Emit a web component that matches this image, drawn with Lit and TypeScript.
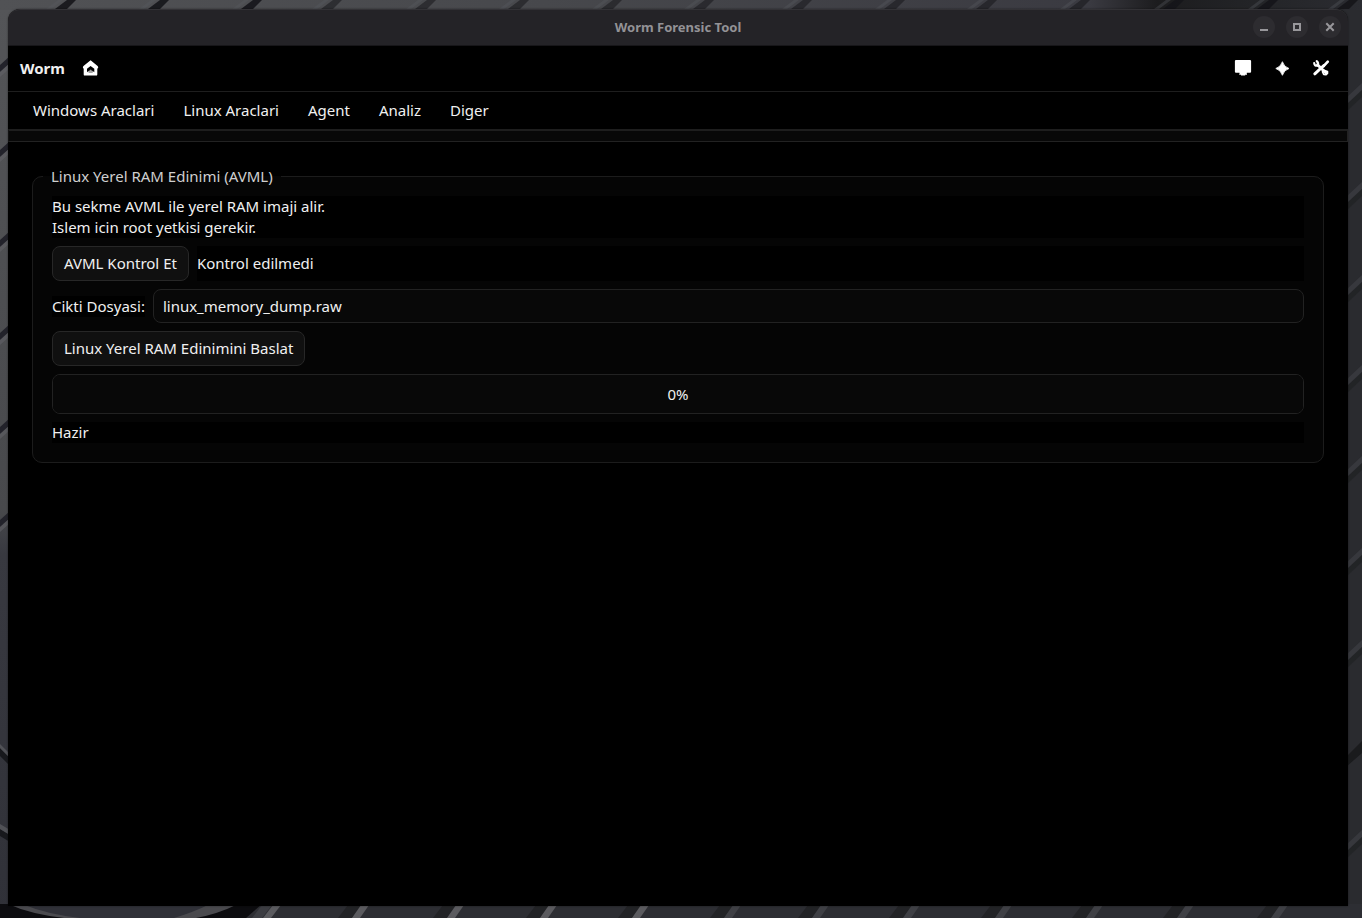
import { LitElement, html, css, svg } from "lit";
import { customElement, state } from "lit/decorators.js";

@customElement("desk-backdrop")
export class DeskBackdrop extends LitElement {
  static styles = css`
    :host {
      display: block;
      background: #303136;
    }
    .art {
      display: block;
      width: 100%;
      height: 100%;
    }
  `;

  render() {
    const top = [60, 153, 246, 326, 420, 513, 606, 698, 796, 889, 981, 1074, 1168, 1262, 1342];
    const bottom = [352, 447, 540, 632, 724, 812, 903, 995, 1086, 1177, 1271];
    const left = [65, 150, 240, 333, 427, 520];
    const right = [98, 197, 290, 380, 471, 563, 655, 845];
    return html`<svg class="art" viewBox="0 0 1362 918" preserveAspectRatio="none" aria-hidden="true">
      <defs>
        <linearGradient id="t" x1="0" x2="1" y1="0" y2="0">
          <stop offset="0" stop-color="#515255" />
          <stop offset=".4" stop-color="#47484c" />
          <stop offset=".8" stop-color="#3a3a41" />
          <stop offset=".85" stop-color="#1c1c1e" />
          <stop offset=".91" stop-color="#222326" />
          <stop offset="1" stop-color="#2b2c31" />
        </linearGradient>
        <linearGradient id="l" x1="0" x2="0" y1="0" y2="1">
          <stop offset="0" stop-color="#545558" />
          <stop offset=".55" stop-color="#48494c" />
          <stop offset=".6" stop-color="#383940" />
          <stop offset="1" stop-color="#303138" />
        </linearGradient>
      </defs>
      <rect width="1362" height="30" fill="url(#t)" />
      <rect y="10" width="30" height="908" fill="url(#l)" />
      <rect x="1340" y="10" width="22" height="908" fill="#2a2b2f" />
      ${top.map(
        (x, i) => svg`<path d="M${x - 9} 9l12-9h-5l-12 9z" fill="#5a5b60" opacity=".35"/>
          <path d="M${x - 5} 9l12-9h9l-9 9z" fill="#15151a" opacity="${i < 3 || i > 11 ? 0.9 : 0.55}"/>`
      )}
      ${left.map(
        (y) => svg`<path d="M0 ${y}l10-9v7l-10 9z" fill="#22222a"/>
          <path d="M0 ${y + 7}l10-9v5l-10 9z" fill="#606165" opacity=".6"/>`
      )}
      <path d="M0 748l10 10v8l-10-10zM0 829l10 6v7l-10-6z" fill="#17181c" />
      <path d="M0 744l10 10v4l-10-10zM0 824l10 6v5l-10-6z" fill="#505156" />
      ${right.map(
        (y) => svg`<path d="M1346 ${y}l16-15v7l-16 15z" fill="#3b3c41" opacity=".8"/>
          <path d="M1346 ${y + 7}l16-15v7l-16 15z" fill="#1e1f22" opacity=".6"/>`
      )}
      <path d="M1346 757l16-16v12l-16 14z" fill="#1a1b1d" />
      <rect y="904" width="1362" height="14" fill="#2d2e33" />
      <path d="M0 904h262l-16 14H0z" fill="#0c0c0f" />
      <path d="M8 904h230q-20 10-42 14H64Q30 914 8 904z" fill="#4a4a4e" />
      <path d="M22 904h188q-16 8-36 14H80Q46 914 22 904z" fill="#303138" />
      <path d="M262 905l-10 13h10l10-13z" fill="#3c3d42" />
      <path d="M273 905l-10 13h8l10-13z" fill="#5b5b5f" />
      ${bottom.map(
        (x, i) => svg`<path d="M${x - 14} 918l10-13h14l-10 13z" fill="#17171a" opacity=".5"/>
          <path d="M${x} 918l9-13h8l-9 13z" fill="${i < 4 ? "#5b5b5f" : "#3f4045"}"/>`
      )}
    </svg>`;
  }
}

@customElement("app-root")
export class AppRoot extends LitElement {
  @state() private output = "linux_memory_dump.raw";
  @state() private progress = 0;

  static styles = css`
    :host {
      display: grid;
      grid-template: minmax(100vh, auto) / minmax(0, 1fr);
      font: 15px/21px "Noto Sans", sans-serif;
      color: #f0f0f0;
    }
    * {
      box-sizing: border-box;
    }
    .backdrop,
    .desk {
      grid-area: 1 / 1;
    }
    .desk {
      display: flex;
      padding: 9px 14px 12px 8px;
      z-index: 1;
    }
    .window {
      flex: 1;
      min-width: 0;
      display: flex;
      flex-direction: column;
      background: #000;
      border-radius: 12px 12px 0 0;
      box-shadow: 0 0 2px #0008;
    }
    button,
    input {
      font: inherit;
      color: inherit;
      margin: 0;
    }
    .titlebar {
      display: grid;
      grid-template-columns: 1fr auto 1fr;
      align-items: center;
      height: 37px;
      padding: 0 7px 1px;
      background: #242327;
      border-top: 1px solid #333236;
      border-bottom: 1px solid #171619;
      border-radius: 12px 12px 0 0;
    }
    .title {
      grid-column: 2;
      margin: 0;
      font-size: 13px;
      font-weight: 700;
      color: #939296;
    }
    .controls {
      display: flex;
      justify-content: flex-end;
      gap: 11px;
    }
    .control {
      width: 22px;
      height: 22px;
      padding: 0;
      border: 0;
      border-radius: 50%;
      background: #2d2c30;
      color: #98979b;
    }
    .control svg,
    .icon svg {
      display: block;
    }
    .header {
      display: flex;
      align-items: center;
      justify-content: space-between;
      height: 46px;
      padding: 0 17px 0 12px;
      border-bottom: 1px solid #1e1e1e;
    }
    .brand,
    .actions {
      display: flex;
      align-items: center;
    }
    .brand {
      gap: 16px;
    }
    .brand-name {
      font-weight: 700;
    }
    .actions {
      gap: 19px;
    }
    .icon {
      padding: 0;
      border: 0;
      background: none;
      color: #fff;
    }
    .menu {
      display: flex;
      gap: 29px;
      height: 37px;
      align-items: center;
      padding: 0 25px;
    }
    .menu-item {
      padding: 0;
      border: 0;
      background: none;
      white-space: nowrap;
    }
    .strip {
      height: 13px;
      background: #080808;
      border: 1px solid #222;
      border-top: 2px solid #1e1e1e;
      border-left-color: #111;
    }
    .page {
      padding: 24px;
    }
    .group {
      margin: 0;
      min-width: 0;
      padding: 0 10px;
      border: 1px solid #1c1c1c;
      border-radius: 10px;
      background: #050505;
    }
    .legend {
      padding: 0 8px;
      color: #cfcfcf;
    }
    .rows {
      display: flex;
      flex-direction: column;
      gap: 8px;
      padding: 9px 9px 19px;
    }
    .text {
      margin: 0;
      background: #000;
    }
    .row {
      display: flex;
      gap: 8px;
      align-items: center;
    }
    .status {
      flex: 1;
      line-height: 35px;
      background: #000;
    }
    .button {
      align-self: flex-start;
      height: 35px;
      padding: 0 11px;
      border: 1px solid #272727;
      border-radius: 8px;
      background: #101010;
    }
    .field {
      flex: 1;
      min-width: 0;
      height: 34px;
      padding: 0 9px;
      border: 1px solid #222;
      border-radius: 8px;
      background: #080808;
      outline: none;
    }
    .meter {
      display: grid;
      place-items: center;
      height: 40px;
    }
    .bar,
    .percent {
      grid-area: 1 / 1;
    }
    .bar {
      appearance: none;
      width: 100%;
      height: 40px;
      border: 1px solid #222;
      border-radius: 8px;
      background: #080808;
      overflow: hidden;
    }
    .bar::-webkit-progress-bar {
      background: #080808;
    }
    .bar::-webkit-progress-value {
      background: #303030;
    }
  `;

  render() {
    return html`
      <desk-backdrop class="backdrop"></desk-backdrop>
      <div class="desk">
        <div class="window">
          <header class="titlebar">
            <h1 class="title">Worm Forensic Tool</h1>
            <div class="controls">
              <button class="control" aria-label="Minimize">
                <svg width="22" height="22" viewBox="0 0 22 22"><path d="M7 13h8v2H7z" fill="currentColor" /></svg>
              </button>
              <button class="control" aria-label="Maximize">
                <svg width="22" height="22" viewBox="0 0 22 22">
                  <path d="M8 8h6v6H8z" fill="none" stroke="currentColor" stroke-width="2" />
                </svg>
              </button>
              <button class="control" aria-label="Close">
                <svg width="22" height="22" viewBox="0 0 22 22">
                  <path d="M7.3 7.3l7.4 7.4M14.7 7.3l-7.4 7.4" stroke="currentColor" stroke-width="2" />
                </svg>
              </button>
            </div>
          </header>
          <div class="header">
            <div class="brand">
              <span class="brand-name">Worm</span>
              <button class="icon" aria-label="Home">
                <svg width="20" height="20" viewBox="0 0 20 20">
                  <path
                    fill="currentColor"
                    d="M9.600 1.300l6.700 5.400q.9.800.9 1.800 0 .9-.9.900v6q0 1.200-1.200 1.200H3.900q-1.200 0-1.200-1.200v-6q-.8 0-.8-.9 0-1 .9-1.800z"
                  />
                  <path d="M6 13.200V9.800L9.600 7l3.700 2.800v3.400l-1.300-.9-.7 0-1.700-1.500-1.700 1.500h-.7z" fill="#000" />
                  <path d="M7.600 14v-2.200l2-1.500 2.100 1.500V14z" fill="#666" opacity=".6" />
                </svg>
              </button>
            </div>
            <div class="actions">
              <button class="icon" aria-label="Display">
                <svg width="20" height="20" viewBox="0 0 20 20">
                  <path
                    fill="currentColor"
                    d="M3 1h14q1.100 0 1.100 1.100v10.600q0 1.100-1.100 1.100h-3.200v1.100H14v.9h-1.800v.8H8v-.8H6.200v-.9h.3v-1.100H3q-1.100 0-1.100-1.100V2.100Q1.900 1 3 1z"
                  />
                </svg>
              </button>
              <button class="icon" aria-label="Highlights">
                <svg width="20" height="20" viewBox="0 0 20 20">
                  <path
                    fill="currentColor"
                    stroke="currentColor"
                    stroke-width=".8"
                    stroke-linejoin="round"
                    d="M10.400 2.700Q12 8 17 9.500 12 11 10.400 16.300 8.800 11 3.800 9.500 8.800 8 10.400 2.700z"
                  />
                </svg>
              </button>
              <button class="icon" aria-label="Tools">
                <svg width="20" height="20" viewBox="0 0 20 20">
                  <g fill="none" stroke="currentColor" stroke-linecap="round" stroke-linejoin="round">
                    <path d="M6.500 5.800l8.500 8.300" stroke-width="2.800" />
                    <path d="M13 11.300l3.400 1.200v1.800l-1.600 1.400-2-.3-1.300-2.700" stroke-width="1.800" />
                    <path d="M3.200 4q.2 3.200 3.400 2.700Q8 4 5.700 2.200" stroke-width="2.200" />
                    <path d="M3.800 14.800l9-8.300" stroke-width="3" />
                    <path d="M12.600 7.200l4.200-4.600" stroke-width="2.600" />
                  </g>
                </svg>
              </button>
            </div>
          </div>
          <nav class="menu">
            ${["Windows Araclari", "Linux Araclari", "Agent", "Analiz", "Diger"].map(
              (name) => html`<button class="menu-item">${name}</button>`
            )}
          </nav>
          <div class="strip"></div>
          <main class="page">
            <fieldset class="group">
              <legend class="legend">Linux Yerel RAM Edinimi (AVML)</legend>
              <div class="rows">
                <p class="text">Bu sekme AVML ile yerel RAM imaji alir.<br />Islem icin root yetkisi gerekir.</p>
                <div class="row">
                  <button class="button">AVML Kontrol Et</button>
                  <span class="status">Kontrol edilmedi</span>
                </div>
                <div class="row">
                  <label class="text" for="output">Cikti Dosyasi:</label>
                  <input
                    class="field"
                    id="output"
                    type="text"
                    .value=${this.output}
                    @input=${(e: Event) => (this.output = (e.target as HTMLInputElement).value)}
                  />
                </div>
                <button class="button">Linux Yerel RAM Edinimini Baslat</button>
                <div class="meter">
                  <progress class="bar" max="100" .value=${this.progress} aria-labelledby="percent"></progress>
                  <span class="percent" id="percent">${this.progress}%</span>
                </div>
                <p class="text">Hazir</p>
              </div>
            </fieldset>
          </main>
        </div>
      </div>
    `;
  }
}
